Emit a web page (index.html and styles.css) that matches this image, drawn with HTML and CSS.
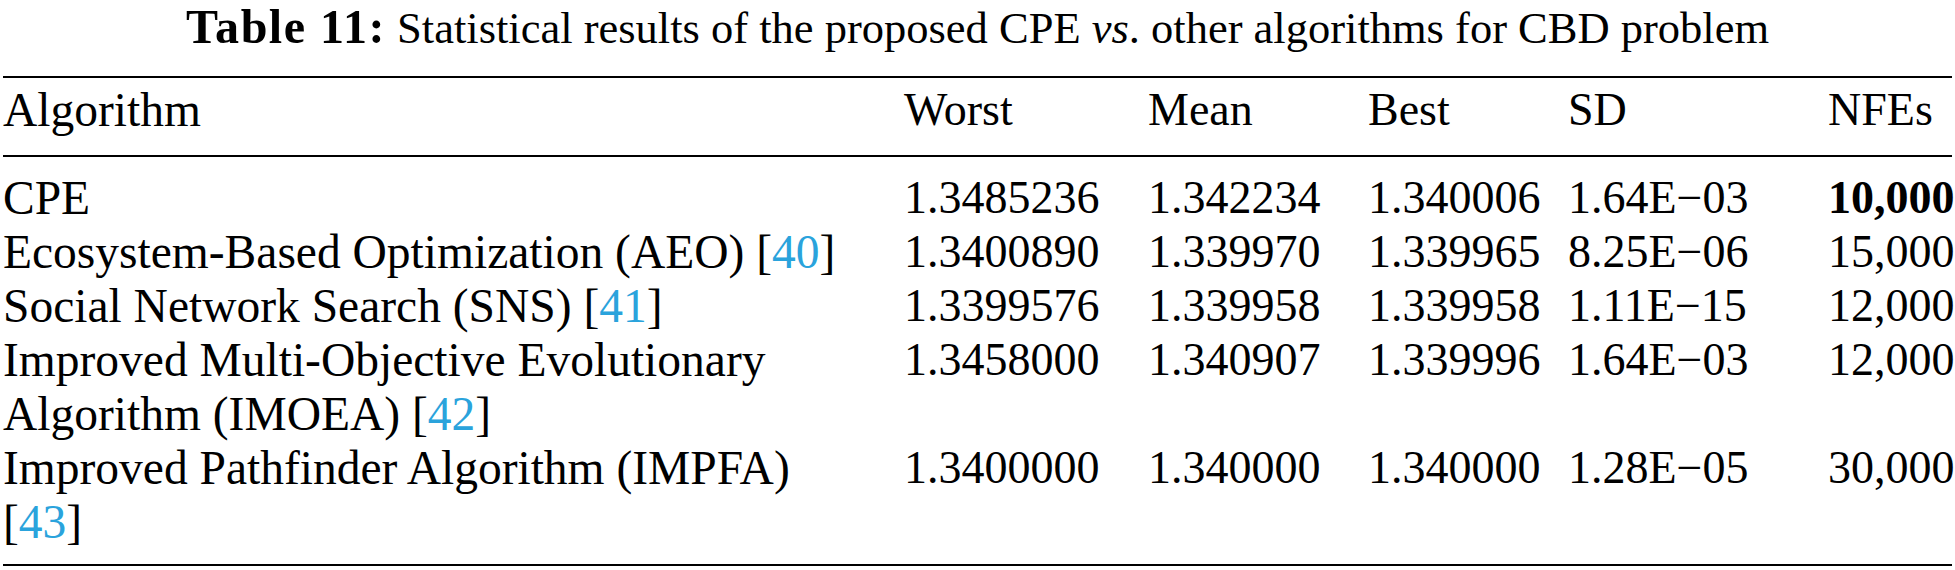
FILE: index.html
```html
<!DOCTYPE html>
<html lang="en">
<head>
  <meta charset="UTF-8">
  <meta name="viewport" content="width=device-width, initial-scale=1.0">
  <title>Table 11 | CBD problem results</title>
  <link rel="stylesheet" href="styles.css">
</head>
<body>
  <div class="table-wrap">
    <p class="caption"><b>Table 11:</b> <span class="caption-text">Statistical results of the proposed CPE <i>vs</i>. other algorithms for CBD problem</span></p>
    <table class="results">
      <colgroup>
        <col class="col-name">
        <col class="col-worst">
        <col class="col-mean">
        <col class="col-best">
        <col class="col-sd">
        <col class="col-nfes">
      </colgroup>
      <thead>
        <tr>
          <th>Algorithm</th>
          <th>Worst</th>
          <th>Mean</th>
          <th>Best</th>
          <th>SD</th>
          <th>NFEs</th>
        </tr>
      </thead>
      <tbody>
        <tr>
          <td>CPE</td>
          <td>1.3485236</td>
          <td>1.342234</td>
          <td>1.340006</td>
          <td>1.64E&minus;03</td>
          <td><b>10,000</b></td>
        </tr>
        <tr>
          <td>Ecosystem-Based Optimization (AEO) [<a href="#ref40">40</a>]</td>
          <td>1.3400890</td>
          <td>1.339970</td>
          <td>1.339965</td>
          <td>8.25E&minus;06</td>
          <td>15,000</td>
        </tr>
        <tr>
          <td>Social Network Search (SNS) [<a href="#ref41">41</a>]</td>
          <td>1.3399576</td>
          <td>1.339958</td>
          <td>1.339958</td>
          <td>1.11E&minus;15</td>
          <td>12,000</td>
        </tr>
        <tr>
          <td>Improved Multi-Objective Evolutionary Algorithm (IMOEA) [<a href="#ref42">42</a>]</td>
          <td>1.3458000</td>
          <td>1.340907</td>
          <td>1.339996</td>
          <td>1.64E&minus;03</td>
          <td>12,000</td>
        </tr>
        <tr>
          <td>Improved Pathfinder Algorithm (IMPFA) [<a href="#ref43">43</a>]</td>
          <td>1.3400000</td>
          <td>1.340000</td>
          <td>1.340000</td>
          <td>1.28E&minus;05</td>
          <td>30,000</td>
        </tr>
      </tbody>
    </table>
  </div>
</body>
</html>
```

FILE: styles.css
```css
body {
  margin: 0;
  background: #fff;
  color: #000;
  font-family: 'Liberation Serif', 'Times New Roman', serif;
  font-size: 46px;
}
.table-wrap {
  padding: 0 3px;
}
.caption {
  margin: 0;
  height: 76px;
  font-size: 44.5px;
  line-height: 54px;
  text-align: center;
}
.caption b {
  font-size: 1.08em;
  letter-spacing: 1.5px;
}
.results {
  width: 100%;
  table-layout: fixed;
  border-collapse: collapse;
  border-top: 2px solid #000;
  border-bottom: 2px solid #000;
}
.col-name { width: 901px; }
.col-worst { width: 244px; }
.col-mean { width: 220px; }
.col-best { width: 200px; }
.col-sd { width: 260px; }
.results th,
.results td {
  padding: 0;
  text-align: left;
  vertical-align: top;
  font-weight: normal;
  line-height: 54px;
}
.results th:first-child,
.results td:first-child {
  font-size: 47.5px;
  padding-right: 50px;
}
.results th {
  padding-top: 5px;
  padding-bottom: 18px;
}
.results thead tr {
  border-bottom: 2px solid #000;
}
.results tbody tr:first-child td {
  padding-top: 14px;
}
.results tbody tr:last-child td {
  padding-bottom: 15px;
}
.results a {
  color: #2aa3dc;
  text-decoration: none;
}
```
